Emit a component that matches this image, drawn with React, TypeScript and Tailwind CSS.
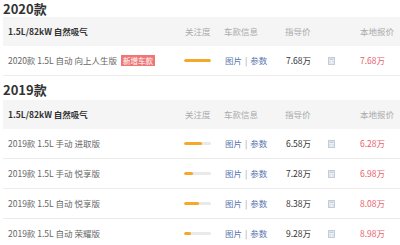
import React from "react";

type Row = { name: string; hot: number; guide: string; local: string; isNew?: boolean };

const sections: { year: string; engine: string; rows: Row[] }[] = [
  {
    year: "2020款",
    engine: "1.5L/82kW 自然吸气",
    rows: [{ name: "2020款 1.5L 自动 向上人生版", hot: 100, guide: "7.68万", local: "7.68万", isNew: true }],
  },
  {
    year: "2019款",
    engine: "1.5L/82kW 自然吸气",
    rows: [
      { name: "2019款 1.5L 手动 进取版", hot: 66, guide: "6.58万", local: "6.28万" },
      { name: "2019款 1.5L 手动 悦享版", hot: 33, guide: "7.28万", local: "6.98万" },
      { name: "2019款 1.5L 自动 悦享版", hot: 57, guide: "8.38万", local: "8.08万" },
      { name: "2019款 1.5L 自动 荣耀版", hot: 25, guide: "9.28万", local: "8.98万" },
    ],
  },
];

// little calculator glyph next to the guide price
function CalcIcon() {
  return (
    <svg width="7" height="8" viewBox="0 0 7 8">
      <rect x="0.5" y="0.5" width="6" height="7" fill="#eef1f6" stroke="#c3ccd9" />
      <rect x="1.5" y="1.5" width="4" height="1.5" fill="#c3ccd9" />
      <path d="M1.5 4.5h1M4.5 4.5h1M1.5 6h1M4.5 6h1" stroke="#c3ccd9" />
    </svg>
  );
}

export default function App() {
  return (
    <div
      className="w-[400px] h-[245px] overflow-hidden bg-white"
      style={{ fontFamily: '"Noto Sans CJK SC", "Noto Sans", sans-serif' }}
    >
      <div>
        {sections.map((s, i) => (
          <div key={s.year}>
            {/* Year heading */}
            <div
              className={`${i === 0 ? "h-[17px] pt-0" : "h-[24px] pt-[2px]"} pl-[3px] flex items-center text-[13px] font-bold text-[#333] leading-none`}
            >
              {s.year}
            </div>

            {/* Header row */}
            <div className="ml-[3px] h-[29px] bg-[#f5f5f5] flex items-center text-[8.5px] leading-none">
              <div className="w-[181px] pl-[5px] font-bold text-[#333]">{s.engine}</div>
              <div className="w-[40px] pl-[1px] text-[#aaa]">关注度</div>
              <div className="w-[61px] text-[#aaa]">车款信息</div>
              <div className="w-[75px] text-[#aaa]">指导价</div>
              <div className="text-[#aaa]">本地报价</div>
            </div>

            {/* Rows */}
            {s.rows.map((r) => (
              <div
                key={r.name}
                className="ml-[3px] h-[30px] border-b border-[#ececec] flex items-center text-[8.5px] leading-none"
              >
                <div className="w-[181px] pl-[5px] flex items-center gap-[4px] text-[#666]">
                  <span>{r.name}</span>
                  {r.isNew && (
                    <span className="bg-[#f07676] text-white px-[2px] py-[1.5px] text-[7.5px]">新增车款</span>
                  )}
                </div>
                <div className="w-[40px]">
                  <div className="w-[27px] h-[3px] bg-[#e9e9e9] rounded-full overflow-hidden">
                    <div className="h-full bg-[#f5a829] rounded-full" style={{ width: `${r.hot}%` }} />
                  </div>
                </div>
                <div className="w-[61px] flex items-center gap-[3px] pl-[1px]">
                  <span className="text-[#5b78b0]">图片</span>
                  <span className="text-[#999]">|</span>
                  <span className="text-[#5b78b0]">参数</span>
                </div>
                <div className="w-[43px] text-[#333] pl-[1px]">{r.guide}</div>
                <div className="w-[32px] flex items-center">
                  <CalcIcon />
                </div>
                <div className="text-[#e8626a]">{r.local}</div>
              </div>
            ))}
          </div>
        ))}
      </div>
    </div>
  );
}
